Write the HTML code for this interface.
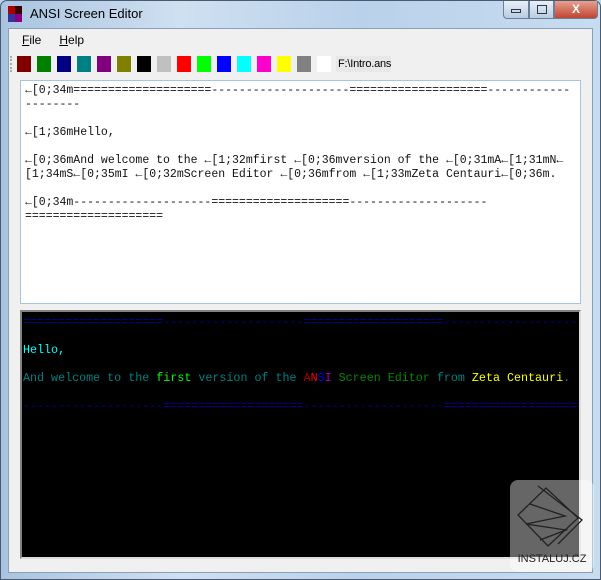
<!DOCTYPE html>
<html><head><meta charset="utf-8"><style>
*{margin:0;padding:0;box-sizing:border-box}
body{width:601px;height:580px;overflow:hidden;background:#bcd3ea;font-family:"Liberation Sans",sans-serif;position:relative}
.frame{position:absolute;left:0;top:0;width:601px;height:580px;background:linear-gradient(90deg,#a9c4e0,#cfe0f1 30%,#b9d1ea 60%,#c8dcf0);border:1px solid #4a5a70;border-radius:7px 7px 0 0}
.title{position:absolute;left:30px;top:6px;font-size:13px;color:#000}
.icon{position:absolute;left:8px;top:6px;width:14px;height:16px}
.client{position:absolute;left:8px;top:28px;width:585px;height:545px;background:#f0f0f0;border:1px solid #8aa0b8}
.menu{position:absolute;left:22px;top:33px;font-size:12px}
.menu span{margin-right:18px}
.sw{position:absolute;top:56px;width:14px;height:16px}
.path{position:absolute;left:336px;top:56px;width:55px;height:16px;background:#e8e8e8;font-size:11px;padding:2px 2px;color:#000;letter-spacing:-0.2px}
.edit{position:absolute;left:20px;top:80px;width:561px;height:224px;background:#fff;border:1px solid #a6c4e4;font-family:"Liberation Mono",monospace;font-size:11.5px;line-height:14px;padding:3px 0 0 4px;white-space:pre;color:#111}
.term{position:absolute;left:20px;top:310px;width:561px;height:249px;background:#000;border:2px solid #828282;border-right-color:#ddd;border-bottom-color:#ddd;font-family:"Liberation Mono",monospace;font-size:11.7px;line-height:14px;padding:3px 0 0 1px;white-space:pre;color:#008080;overflow:hidden}
.btn{position:absolute;top:1px;height:18px;border:1px solid #6d7f98;border-top:none;background:linear-gradient(#e8f0f8,#b8cce2)}
.wm{position:absolute;left:510px;top:480px;width:84px;height:92px;background:rgba(255,255,255,.4);border-radius:8px}
</style></head><body>
<div class="frame"></div>
<div class="icon"><div style="position:absolute;left:0;top:0;width:7px;height:8px;background:#a00"></div><div style="position:absolute;left:7px;top:0;width:7px;height:8px;background:#300"></div><div style="position:absolute;left:0;top:8px;width:7px;height:8px;background:#339"></div><div style="position:absolute;left:7px;top:8px;width:7px;height:8px;background:#808"></div></div>
<div class="title">ANSI Screen Editor</div>
<div class="btn" style="left:503px;width:26px;border-radius:0 0 0 4px"><div style="margin:8px auto 0;width:10px;height:4px;border:1px solid #334"></div></div>
<div class="btn" style="left:529px;width:25px"><div style="margin:4px auto 0;width:10px;height:9px;border:1px solid #334"></div></div>
<div class="btn" style="left:554px;width:44px;background:linear-gradient(#e8a090,#c04530);border-radius:0 0 4px 0;color:#fff;font-weight:bold;font-size:12px;text-align:center;line-height:16px">X</div>
<div class="client"></div>
<div class="menu"><span><u>F</u>ile</span><span><u>H</u>elp</span></div>
<div style="position:absolute;left:10px;top:56px;height:16px;border-left:2px dotted #aaa"></div>
<div class="sw" style="left:17px;background:#800000"></div>
<div class="sw" style="left:37px;background:#008000"></div>
<div class="sw" style="left:57px;background:#000080"></div>
<div class="sw" style="left:77px;background:#008080"></div>
<div class="sw" style="left:97px;background:#800080"></div>
<div class="sw" style="left:117px;background:#808000"></div>
<div class="sw" style="left:137px;background:#000"></div>
<div class="sw" style="left:157px;background:#c0c0c0"></div>
<div class="sw" style="left:177px;background:#f00"></div>
<div class="sw" style="left:197px;background:#0f0"></div>
<div class="sw" style="left:217px;background:#00f"></div>
<div class="sw" style="left:237px;background:#0ff"></div>
<div class="sw" style="left:257px;background:#f0c"></div>
<div class="sw" style="left:277px;background:#ff0"></div>
<div class="sw" style="left:297px;background:#808080"></div>
<div class="sw" style="left:317px;background:#fff"></div>
<div class="path">F:\Intro.ans</div>
<div class="edit">←[0;34m====================--------------------====================------------
--------

←[1;36mHello,

←[0;36mAnd welcome to the ←[1;32mfirst ←[0;36mversion of the ←[0;31mA←[1;31mN←
[1;34mS←[0;35mI ←[0;32mScreen Editor ←[0;36mfrom ←[1;33mZeta Centauri←[0;36m.

←[0;34m--------------------====================--------------------
====================</div>
<div class="term"><span style="color:#00a">====================--------------------====================--------------------</span>

<span style="color:#0ff">Hello,</span>

And welcome to the <span style="color:#0f0">first</span> version of the <span style="color:#a00">A</span><span style="color:#f00">N</span><span style="color:#00f">S</span><span style="color:#a0a">I</span> <span style="color:#080">Screen Editor</span> from <span style="color:#ff0">Zeta Centauri</span>.

<span style="color:#00a">--------------------====================--------------------====================</span></div>
<div class="wm"><svg width="84" height="92" viewBox="0 0 84 92"><g fill="none" stroke="#222" stroke-width="1.3"><path d="M8 35 L36 8 L68 38 L38 66 Z"/><path d="M20 24 L55 36 L16 44 L56 50 L30 60"/><path d="M28 6 L72 40 L48 64"/></g><text x="42" y="82" font-size="11" text-anchor="middle" fill="#222" font-family="Liberation Sans">INSTALUJ.CZ</text></svg></div>
</body></html>
